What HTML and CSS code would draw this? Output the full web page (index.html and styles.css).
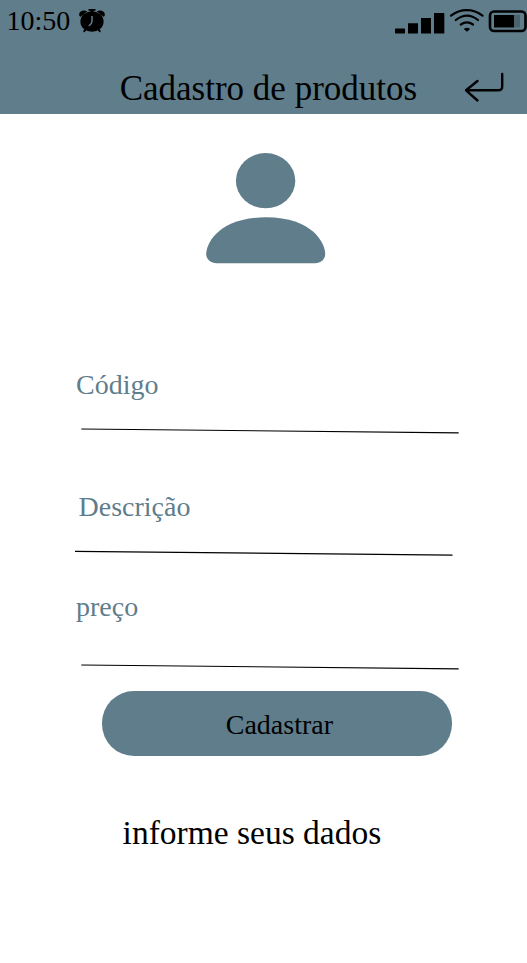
FILE: index.html
```html
<!DOCTYPE html>
<html lang="pt-BR">
<head>
<meta charset="utf-8">
<title>Cadastro de produtos</title>
<link rel="stylesheet" href="styles.css">
</head>
<body>
<header class="header">
  <div class="status">
    <span class="time">10:50</span>
    <svg class="alarm" width="28" height="25" viewBox="0 0 28 25">
      <path d="M10.500 1h7v1.700h-2v2.300h-3V2.700h-2z"/>
      <path d="M1.300 7.600C0.300 4 4.500 0.800 9.300 3.300L3 8.600C2.300 9 1.500 8.600 1.300 7.600zM26.700 7.600C27.700 4 23.500 0.800 18.700 3.300L25 8.600C25.700 9 26.500 8.600 26.700 7.600z"/>
      <ellipse cx="14" cy="13.500" rx="11.600" ry="10.300"/>
      <path class="leg" d="M8 20.500l-1.700 2.600M20 20.500l1.700 2.600"/>
      <path class="hand" d="M14 8v5.500q0 2-3.200 4.500"/>
    </svg>
    <svg class="signals" width="134" height="28" viewBox="0 0 134 28">
      <path d="M2 22.500h10v5H2zM15 17.300h10v10.200H15zM28 12h10v15.500H28zM41 7h10.300v20.500H41z"/>
      <g class="stroke">
        <path d="M58 9.700C67.500 2.300 80 2.300 89.500 9.700M62.800 14C70 8.300 78 8.300 85 14M67.800 18.500c4-2.800 8.200-2.800 12.200 0"/>
        <rect class="battery" x="97" y="5.500" width="35.500" height="19.500" rx="4"/>
      </g>
      <path d="M71.300 22.600c1.600-1.300 3.700-1.300 5.300 0q0.500 0.500 0 1L74 25.700l-2.700-2.100q-0.500-0.500 0-1zM101 9h20v12.500h-20z"/>
      <path class="charge" d="M121 9h6v12.500h-6z"/>
    </svg>
  </div>
  <div class="title-row">
    <h1 class="title">Cadastro de produtos</h1>
    <svg class="back" width="42" height="32" viewBox="0 0 42 32">
      <path d="M39.200 3v12.500Q39.200 19.300 35 19.300H3M14.500 10L3 19.300L14.500 29.500"/>
    </svg>
  </div>
</header>
<main class="content">
  <svg class="avatar" width="120" height="112" viewBox="0 0 120 112">
    <ellipse cx="59.600" cy="27.700" rx="29.700" ry="27.600"/>
    <path d="M0.200 101C0.200 91 12 64.300 59.700 64.300S119.200 91 119.200 101C119.200 106.500 114.500 110.200 109 110.200H10.500C5 110.200 0.200 106.500 0.200 101z"/>
  </svg>
  <form class="form">
    <div class="field code">
      <label class="label">Código</label>
      <svg class="line" width="378" height="6" viewBox="0 0 378 6"><path d="M0.300 1L377.700 4.800"/></svg>
    </div>
    <div class="field description">
      <label class="label">Descrição</label>
      <svg class="line" width="378" height="6" viewBox="0 0 378 6"><path d="M0 1.300L377.500 5.100"/></svg>
    </div>
    <div class="field price">
      <label class="label">preço</label>
      <svg class="line" width="378" height="6" viewBox="0 0 378 6"><path d="M0.300 1L377.700 4.800"/></svg>
    </div>
    <button class="submit" type="button">Cadastrar</button>
  </form>
  <p class="hint">informe seus dados</p>
</main>
</body>
</html>
```
FILE: styles.css
```css
* {
  box-sizing: border-box;
}

body {
  margin: 0;
  background: #fff;
  color: #000;
  font: 28px/32px "Liberation Serif", "Times New Roman", serif;
}

svg {
  display: block;
  flex: none;
}

.header {
  height: 114.300px;
  background: #607d8b;
}

.status {
  display: flex;
  height: 60px;
  padding: 5px 0 0 6.500px;
}

.alarm {
  margin: 3px 0 0 7.500px;
}

.signals {
  margin: 1px 0 0 auto;
}

.leg {
  fill: none;
  stroke: #000;
  stroke-width: 2;
  stroke-linecap: round;
}

.hand {
  fill: none;
  stroke: #607d8b;
  stroke-width: 1.500;
}

.stroke {
  fill: none;
  stroke: #000;
  stroke-width: 2.200;
  stroke-linecap: round;
}

.battery {
  stroke-width: 2.600;
}

.charge {
  fill: #4b626d;
}

.title-row {
  display: flex;
  justify-content: space-between;
  padding: 9px 22px 0 119.700px;
}

.title {
  margin: 0;
  font-size: 35px;
  font-weight: 400;
  line-height: 40px;
  white-space: nowrap;
}

.back {
  margin-top: 2px;
  fill: none;
  stroke: #000;
  stroke-width: 2.400;
  stroke-linecap: round;
  stroke-linejoin: round;
}

.avatar {
  margin: 38.700px 0 0 206px;
  fill: #607d8b;
}

.form {
  padding: 104px 0 0 75px;
}

.field {
  display: flex;
  flex-direction: column;
  gap: 27px;
}

.label {
  color: #607d8b;
}

.line {
  fill: none;
  stroke: #000;
  stroke-width: 1.200;
}

.code {
  padding-left: 1px;
}

.code .line,
.price .line {
  margin-left: 5px;
}

.description {
  margin-top: 57px;
}

.description .label {
  padding-left: 3.500px;
}

.price {
  gap: 41px;
  margin-top: 35px;
  padding-left: 1px;
}

.submit {
  display: block;
  width: 350px;
  height: 65px;
  margin: 21px 0 0 27.400px;
  padding: 3px 0 0 4px;
  border: 0;
  border-radius: 32px;
  background: #607d8b;
  color: #000;
  font: inherit;
}

.hint {
  margin: 57px 0 0 122.600px;
  font-size: 33.500px;
  line-height: 40px;
}
```
